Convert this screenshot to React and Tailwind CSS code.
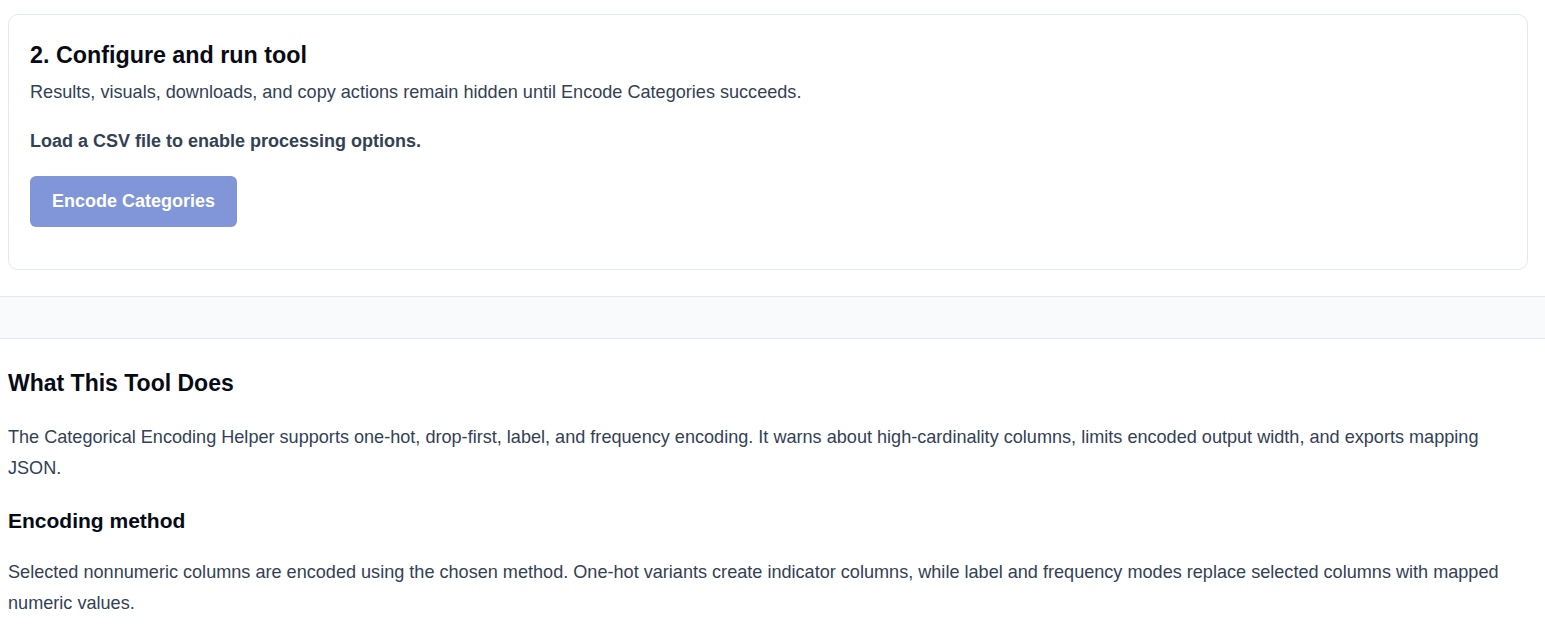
import React from 'react';

const App = () => {
  return (
    <div className="min-h-[640px] bg-white font-['Liberation_Sans',Arial,sans-serif] pt-[14px]">
      <div className="ml-2 w-[1520px]">
        <section className="border border-[#e2e8f0] rounded-[10px] bg-white pt-[22px] px-[21px] pb-[42px]">
          <h2 className="text-[23.3px] leading-[36px] font-bold text-[#080b16]">2. Configure and run tool</h2>
          <p className="mt-[7px] text-[18.1px] leading-[24px] text-[#334155]">
            Results, visuals, downloads, and copy actions remain hidden until Encode Categories succeeds.
          </p>
          <p className="mt-[25px] text-[18px] leading-[24px] font-bold text-[#334155]">
            Load a CSV file to enable processing options.
          </p>
          <button
            type="button"
            disabled
            className="mt-[23px] h-[51px] w-[207px] rounded-[6px] bg-[#8096d8] text-white font-bold text-[18px]"
          >
            Encode Categories
          </button>
        </section>
      </div>

      <div className="mt-[26px] h-[43px] bg-[#f8fafc] border-y border-[#e2e8f0]"></div>

      <div className="ml-2 w-[1520px] pt-[27px]">
        <h2 className="text-[23px] leading-[34px] font-bold text-[#080b16]">What This Tool Does</h2>
        <p className="mt-[22px] text-[18.1px] leading-[30.6px] text-[#334155]">
          The Categorical Encoding Helper supports one-hot, drop-first, label, and frequency encoding. It warns about high-cardinality columns, limits encoded output width, and exports mapping JSON.
        </p>
        <h3 className="mt-[23px] text-[21px] leading-[30px] font-bold text-[#080b16]">Encoding method</h3>
        <p className="mt-[21px] text-[18.1px] leading-[30.6px] text-[#334155]">
          Selected nonnumeric columns are encoded using the chosen method. One-hot variants create indicator columns, while label and frequency modes replace selected columns with mapped numeric values.
        </p>
      </div>
    </div>
  );
};

export default App;
